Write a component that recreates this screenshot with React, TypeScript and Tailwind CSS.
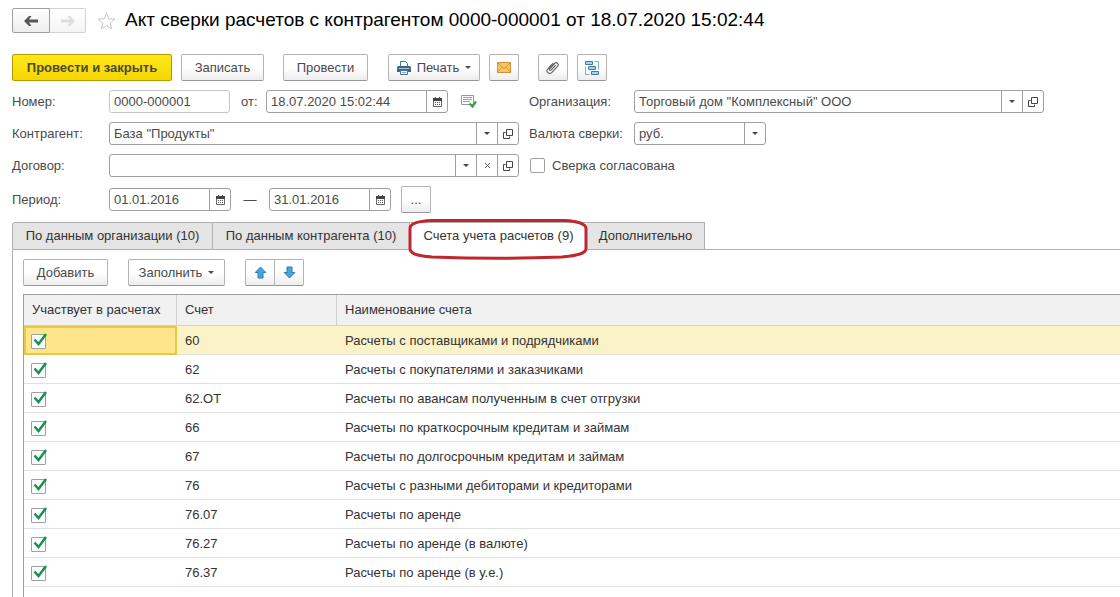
import { useState } from "react";
import type { ReactNode } from "react";

const tabs = [
  { title: "По данным организации (10)", className: "w-[201px]" },
  { title: "По данным контрагента (10)", className: "w-[197px]" },
  { title: "Счета учета расчетов (9)", className: "w-[177px]" },
  { title: "Дополнительно", className: "w-[118px]" },
];

const accounts = [
  { code: "60", name: "Расчеты с поставщиками и подрядчиками" },
  { code: "62", name: "Расчеты с покупателями и заказчиками" },
  { code: "62.ОТ", name: "Расчеты по авансам полученным в счет отгрузки" },
  { code: "66", name: "Расчеты по краткосрочным кредитам и займам" },
  { code: "67", name: "Расчеты по долгосрочным кредитам и займам" },
  { code: "76", name: "Расчеты с разными дебиторами и кредиторами" },
  { code: "76.07", name: "Расчеты по аренде" },
  { code: "76.27", name: "Расчеты по аренде (в валюте)" },
  { code: "76.37", name: "Расчеты по аренде (в у.е.)" },
];

const buttonStyle =
  "flex h-[27px] shrink-0 items-center justify-center rounded-[2px] border border-[#b3b3b3] border-b-[#979797] bg-linear-to-b from-white from-50% to-[#ededed] text-[#4a4a4a]";
const fieldStyle =
  "flex h-[23px] min-w-0 rounded-[3px] border border-[#a0a0a0] bg-white";
const sideButtonStyle =
  "flex w-[21px] shrink-0 items-center justify-center border-l border-[#a0a0a0] text-[#444]";

function Caret() {
  return (
    <svg width="6" height="3" viewBox="0 0 6 3" fill="currentColor">
      <path d="M0 0h6L3 3z" />
    </svg>
  );
}

function CalendarIcon() {
  return (
    <svg width="9" height="10" viewBox="0 0 9 10" fill="none">
      <path d="M.5 2.500h8v7h-8z" stroke="#666" />
      <path d="M0 1h9v3H0zM2 0h1v2H2zM6 0h1v2H6z" fill="#444" />
      <path d="M2 5.500h5M2 7.500h5" stroke="#555" strokeDasharray="1 1" />
    </svg>
  );
}

function OpenIcon() {
  return (
    <svg width="10" height="10" viewBox="0 0 10 10" fill="none" stroke="#444">
      <path d="M3.500.5h6v6h-6z" />
      <path d="M2.500 3.500h-2v6h6v-2" />
    </svg>
  );
}

function PrinterIcon() {
  return (
    <svg width="14" height="14" viewBox="0 0 14 14" fill="none">
      <path d="M3.500 5V.5h5l2 2V5" fill="#fff" stroke="#4f7696" />
      <path d="M0 6.500A1.500 1.500 0 0 1 1.500 5h11A1.500 1.500 0 0 1 14 6.500V11H0z" fill="#3c6688" />
      <path d="M1.500 7.500h11" stroke="#a8c3d8" />
      <path d="M3.500 9.500h7v4h-7z" fill="#fff" stroke="#4f7696" />
      <path d="M5 11.500h4" stroke="#8ba9c0" />
    </svg>
  );
}

function MailIcon() {
  return (
    <svg width="14" height="11" viewBox="0 0 14 11" fill="none" stroke="#cf8f35">
      <path d="M.5.5h13v10H.5z" fill="#fbc765" />
      <path d="M.5.5 7 6.500 13.500.5M.5 10.500 5 5M13.500 10.500 9 5" strokeWidth=".9" />
    </svg>
  );
}

function ClipIcon() {
  return (
    <svg width="14" height="14" viewBox="0 0 14 14" fill="none" stroke="#5a5a5a" strokeWidth="1.100" strokeLinecap="round">
      <path d="M9.500 4.300 5 9c-.8.9-2.100-.3-1.300-1.200L8.800 2.400c1.800-1.900 4.700.7 2.900 2.700l-6 6.500C3.200 14-.6 10.600 1.700 8l5.200-5.500" />
    </svg>
  );
}

function StructureIcon() {
  return (
    <svg width="14" height="14" viewBox="0 0 14 14" fill="#a9d0ec" stroke="#3f7ba8">
      <path d="M9.500.5h4v8M.5 5.500v8h4" fill="none" stroke="#7fb0d2" />
      <path d="M.5.5h7v3h-7zM3.500 5.500h7v3h-7zM6.500 10.500h7v3h-7z" />
    </svg>
  );
}

function PostedIcon() {
  return (
    <svg width="16" height="13" viewBox="0 0 16 13" fill="none">
      <path d="M.5.5h12v9H.5z" stroke="#8c9aa5" fill="#fff" />
      <path d="M2 2.500h9M2 4.500h9M2 6.500h7" stroke="#9aa6b0" />
      <path d="m8.500 8.500 3 3 3.500-5" stroke="#3ba648" strokeWidth="2.400" />
    </svg>
  );
}

function ArrowIcon({ className }: { className: string }) {
  return (
    <svg width="14" height="10" viewBox="0 0 14 10" fill="currentColor" className={className}>
      <path d="M0 5 5 0h2.500L5 3.500H14v3H5L7.500 10H5z" />
    </svg>
  );
}

function MoveIcon({ className = "" }: { className?: string }) {
  return (
    <svg width="13" height="13" viewBox="0 0 13 13" fill="#43a7e0" stroke="#2b7db3" className={className}>
      <path d="M6.500 1 1.200 6.500H4V12h5V6.500h2.800z" />
    </svg>
  );
}

function DateField({ label, value, className = "" }: { label: string; value: string; className?: string }) {
  return (
    <div className={`${fieldStyle} ${className}`}>
      <input aria-label={label} defaultValue={value} className="w-full min-w-0 px-1 outline-none" />
      <button type="button" aria-label="Выбрать дату" className={sideButtonStyle}>
        <CalendarIcon />
      </button>
    </div>
  );
}

type SelectFieldProps = {
  id: string;
  value: string;
  className?: string;
  children?: ReactNode;
};

function SelectField({ id, value, className = "", children }: SelectFieldProps) {
  return (
    <div className={`${fieldStyle} ${className}`}>
      <div className="relative flex min-w-0 flex-1">
        <select id={id} className="w-full appearance-none pr-6 pl-1 outline-none">
          <option>{value}</option>
        </select>
        <span className={`${sideButtonStyle} pointer-events-none absolute inset-y-0 right-0`}>
          <Caret />
        </span>
      </div>
      {children}
    </div>
  );
}

function OpenButton() {
  return (
    <button type="button" aria-label="Открыть" className={sideButtonStyle}>
      <OpenIcon />
    </button>
  );
}

function Header() {
  return (
    <header className="flex items-center">
      <div className="flex">
        <button aria-label="Назад" className="flex h-[25px] w-[38px] items-center justify-center rounded-l-[2px] border border-[#a0a0a0] bg-linear-to-b from-white to-[#ededed]">
          <ArrowIcon className="text-[#555]" />
        </button>
        <button aria-label="Вперед" className="flex h-[25px] w-[36px] items-center justify-center rounded-r-[2px] border border-l-0 border-[#d2d2d2] bg-linear-to-b from-white to-[#f5f5f5]">
          <ArrowIcon className="rotate-180 text-[#dcdcdc]" />
        </button>
      </div>
      <button aria-label="Добавить в избранное" className="ml-[11px]">
        <svg width="19" height="18" viewBox="0 0 19 18" fill="none" stroke="#c4c8cc">
          <path d="m9.500 1 2.200 5.800 6.300.3-4.900 3.900 1.700 6-5.300-3.400L4.200 17l1.700-6L1 7.100l6.300-.3z" />
        </svg>
      </button>
      <h1 className="ml-[9px] pb-[2px] text-[19px] leading-[23px] whitespace-nowrap text-black">
        Акт сверки расчетов с контрагентом 0000-000001 от 18.07.2020 15:02:44
      </h1>
    </header>
  );
}

function Toolbar() {
  return (
    <div className="mt-[21px] flex">
      <button className="h-[27px] w-[160px] rounded-[2px] border border-[#b59b00] bg-linear-to-b from-[#ffe71a] to-[#f7d600] font-bold text-[#4a4a2a]">
        Провести и закрыть
      </button>
      <button className={`${buttonStyle} ml-[9px] w-[83px]`}>Записать</button>
      <button className={`${buttonStyle} ml-[19px] w-[85px]`}>Провести</button>
      <button className={`${buttonStyle} ml-[20px] w-[92px] gap-[6px]`}>
        <PrinterIcon />
        Печать
        <Caret />
      </button>
      <button aria-label="Отправить по почте" className={`${buttonStyle} ml-[9px] w-[30px]`}>
        <MailIcon />
      </button>
      <button aria-label="Присоединенные файлы" className={`${buttonStyle} ml-[19px] w-[30px]`}>
        <ClipIcon />
      </button>
      <button aria-label="Структура подчиненности" className={`${buttonStyle} ml-[9px] w-[30px]`}>
        <StructureIcon />
      </button>
    </div>
  );
}

function DocumentForm() {
  return (
    <form className="mt-[9px] grid grid-cols-[507fr_515fr] gap-x-[10px] pr-[76px]">
      <div className="flex flex-col gap-[9px]">
        <div className="flex items-center">
          <label htmlFor="number" className="w-[97px] shrink-0">Номер:</label>
          <input id="number" defaultValue="0000-000001" className="h-[23px] w-[121px] rounded-[3px] border border-[#c6c6c6] px-1 outline-none" />
          <span className="w-[36px] pl-[11px]">от:</span>
          <DateField label="Дата документа" value="18.07.2020 15:02:44" className="w-[182px]" />
          <span className="ml-[13px]">
            <PostedIcon />
          </span>
        </div>
        <div className="flex items-center">
          <label htmlFor="partner" className="w-[97px] shrink-0">Контрагент:</label>
          <SelectField id="partner" value={'База "Продукты"'} className="flex-1">
            <OpenButton />
          </SelectField>
        </div>
        <div className="flex items-center">
          <label htmlFor="contract" className="w-[97px] shrink-0">Договор:</label>
          <SelectField id="contract" value="" className="flex-1">
            <button type="button" aria-label="Очистить" className={sideButtonStyle}>
              <svg width="7" height="7" viewBox="0 0 7 7" stroke="#555">
                <path d="m1 1 5 5M6 1 1 6" />
              </svg>
            </button>
            <OpenButton />
          </SelectField>
        </div>
        <div className="flex items-center">
          <span className="w-[97px] shrink-0">Период:</span>
          <DateField label="Начало периода" value="01.01.2016" className="w-[122px]" />
          <span className="w-[38px] text-center">—</span>
          <DateField label="Конец периода" value="31.01.2016" className="w-[122px]" />
          <button type="button" aria-label="Выбрать период" className={`${buttonStyle} ml-[10px] w-[30px]`}>...</button>
        </div>
      </div>

      <div className="flex flex-col gap-[9px]">
        <div className="flex items-center">
          <label htmlFor="company" className="w-[105px] shrink-0">Организация:</label>
          <SelectField id="company" value={'Торговый дом "Комплексный" ООО'} className="flex-1">
            <OpenButton />
          </SelectField>
        </div>
        <div className="flex items-center">
          <label htmlFor="currency" className="w-[105px] shrink-0">Валюта сверки:</label>
          <SelectField id="currency" value="руб." className="w-[132px]" />
        </div>
        <label className="flex h-[23px] items-center gap-[7px] pl-px">
          <input type="checkbox" className="size-[15px] appearance-none rounded-[2px] border border-[#a0a0a0] bg-white" />
          Сверка согласована
        </label>
      </div>
    </form>
  );
}

function Tabs({ active, onChange }: { active: number; onChange: (index: number) => void }) {
  return (
    <div role="tablist" className="flex h-[28px]">
      {tabs.map((tab, index) => (
        <button
          key={tab.title}
          role="tab"
          aria-selected={index === active}
          onClick={() => onChange(index)}
          className={`relative border-y border-[#b0b0b0] whitespace-nowrap text-[#333] first:rounded-tl-[3px] first:border-l last:rounded-tr-[3px] ${tab.className} ${
            index === active ? "border-b-white bg-white" : "border-r bg-[#e4e4e4]"
          }`}
        >
          {tab.title}
          {index === active && (
            <svg viewBox="0 0 180 42" preserveAspectRatio="none" fill="none" stroke="#c0272d" strokeWidth="3" className="pointer-events-none absolute -top-[5px] -left-[2px] z-10 h-[42px] w-[180px]">
              <path d="M24 2.500h132c12 .5 22 3 22 8v20c0 5-8 7-24 8.500-40 1.500-88 1.500-130 0C8 37.500 2 35.500 2 30.500v-20c0-5 8-7.500 22-8z" />
            </svg>
          )}
        </button>
      ))}
      <div className="flex-1 border-b border-[#b0b0b0]" />
    </div>
  );
}

function AccountsTable() {
  const [selected, setSelected] = useState(0);

  return (
    <div className="mt-[8px] flex-1 border-t border-l border-[#a0a0a0]">
      <table className="w-full table-fixed border-separate border-spacing-0 text-left text-[#333]">
        <thead>
          <tr className="h-[31px] bg-[#f1f1f1]">
            <th className="w-[153px] border-r border-b border-[#d0d0d0] pl-2 font-normal whitespace-nowrap">Участвует в расчетах</th>
            <th className="w-[160px] border-r border-b border-[#d0d0d0] pl-2 font-normal">Счет</th>
            <th className="border-b border-[#d0d0d0] pl-2 font-normal">Наименование счета</th>
          </tr>
        </thead>
        <tbody>
          {accounts.map((account, index) => (
            <tr
              key={account.code}
              onClick={() => setSelected(index)}
              className={`h-[29px] ${index === selected ? "bg-[#fcf2c8]" : "bg-white"}`}
            >
              <td
                className={
                  index === selected
                    ? "border-2 border-[#ebc842] bg-[#fde58c] pt-[2px] pl-[5px]"
                    : "border-b border-[#e2e2e2] pt-[2px] pl-[7px]"
                }
              >
                <div className="relative size-[15px]">
                  <input type="checkbox" defaultChecked aria-label={account.name} className="peer block size-[15px] appearance-none rounded-[1px] border border-[#a0a0a0] bg-white" />
                  <svg width="16" height="15" viewBox="0 0 16 15" fill="none" stroke="#159253" strokeWidth="2.500" className="pointer-events-none invisible absolute -top-[2px] left-0 peer-checked:visible">
                    <path d="M3.500 7.500 7.500 12 15 2" />
                  </svg>
                </div>
              </td>
              <td className="border-b border-[#e2e2e2] pt-[2px] pl-2">{account.code}</td>
              <td className="border-b border-[#e2e2e2] pt-[2px] pl-2 whitespace-nowrap">{account.name}</td>
            </tr>
          ))}
        </tbody>
      </table>
    </div>
  );
}

export default function App() {
  const [activeTab, setActiveTab] = useState(2);

  return (
    <main className="flex min-h-screen flex-col overflow-x-hidden bg-white pt-[8px] pl-[12px] font-['Liberation_Sans',Arial,sans-serif] text-[13px] leading-[16px] text-[#4a4a4a]">
      <Header />
      <Toolbar />
      <DocumentForm />
      <section className="mt-[9px] flex flex-1 flex-col">
        <Tabs active={activeTab} onChange={setActiveTab} />
        <div className="flex flex-1 flex-col border-l border-[#b0b0b0] pt-[9px] pl-[10px]">
          <div className="flex">
            <button className={`${buttonStyle} w-[85px]`}>Добавить</button>
            <button className={`${buttonStyle} ml-[20px] w-[97px] gap-[6px]`}>
              Заполнить
              <Caret />
            </button>
            <button aria-label="Переместить вверх" className={`${buttonStyle} ml-[20px] w-[30px] rounded-r-none`}>
              <MoveIcon />
            </button>
            <button aria-label="Переместить вниз" className={`${buttonStyle} w-[29px] rounded-l-none border-l-0`}>
              <MoveIcon className="rotate-180" />
            </button>
          </div>
          <AccountsTable />
        </div>
      </section>
    </main>
  );
}
